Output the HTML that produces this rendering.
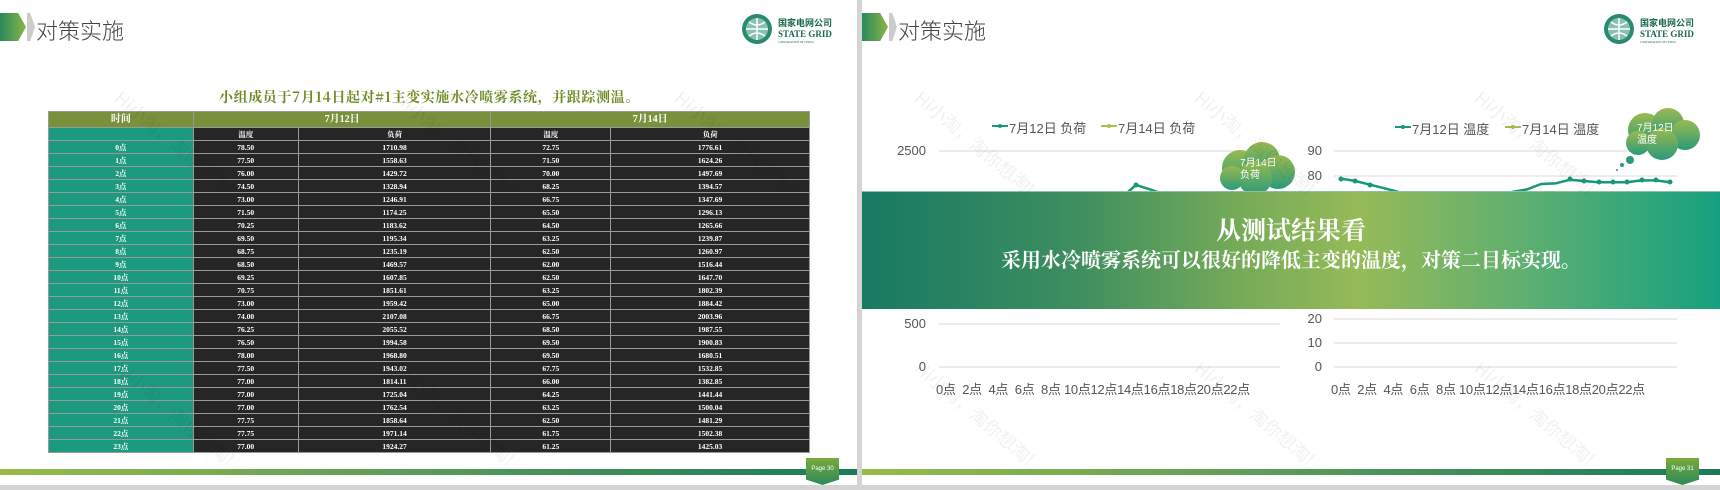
<!DOCTYPE html>
<html><head><meta charset="utf-8"><style>
*{margin:0;padding:0;box-sizing:border-box}
body{width:1720px;height:490px;background:#fff;position:relative;overflow:hidden;font-family:"Liberation Sans","Noto Sans CJK SC",sans-serif}
.abs{position:absolute}
.title{font-size:22px;color:#444;font-family:"Noto Sans CJK SC",sans-serif;font-weight:300}
.chev{width:26px;height:28px;background:linear-gradient(90deg,#2a8a5a,#8ab44a);clip-path:polygon(0 0,70% 0,100% 50%,70% 100%,0 100%)}
.chev2{width:8px;height:28px;background:#ccc;clip-path:polygon(0 0,40% 0,100% 50%,40% 100%,0 100%)}
table{border-collapse:collapse;font-family:"Liberation Serif","Noto Serif CJK SC",serif;font-weight:bold;color:#fff;font-size:7.5px;text-align:center}
td{border:1px solid #9a9a9a;height:13px;padding:0;line-height:11px;background:#262626}
td.t{background:#1c9a80}
tr.h td{background:#78913a;height:16px;font-size:10px}
.cap{font-family:"Noto Serif CJK SC","Liberation Serif",serif;color:#6e8a22;font-size:14px;font-weight:bold;letter-spacing:0.6px}
.wm{color:rgba(0,0,0,0.06);font-size:18px;transform:rotate(40deg);font-family:"Noto Sans CJK SC",sans-serif;white-space:nowrap}
.pg{width:33px;height:27px;background:linear-gradient(#7aaa3a,#2a8a5a);clip-path:polygon(0 0,100% 0,100% 80%,50% 100%,0 80%);color:#fff;font-size:6px;text-align:center;line-height:22px}
.ax{font-size:13px;color:#555;font-family:"Liberation Sans","Noto Sans CJK SC",sans-serif}
.leg{font-size:13px;color:#555;font-family:"Liberation Sans","Noto Sans CJK SC",sans-serif}
</style></head><body>

<div class="abs" style="left:857px;top:0;width:5px;height:490px;background:#d4d4d4"></div>
<div class="abs" style="left:0;top:485px;width:1720px;height:5px;background:#d4d4d4"></div>

<div class="abs chev" style="left:0;top:13px"></div>
<div class="abs chev2" style="left:27px;top:13px"></div>
<div class="abs title" style="left:36px;top:14px">对策实施</div>

<svg class="abs" style="left:740px;top:12px" width="100" height="36">
<circle cx="17" cy="17" r="15" fill="#2a8a70"/><circle cx="17" cy="17" r="11" fill="#8ac0b0"/><path d="M6 17 H28 M17 6 V28 M9 10 Q17 16 25 10 M9 24 Q17 18 25 24" stroke="#fff" stroke-width="1.5" fill="none"/>
<text x="38" y="14" font-size="9" fill="#1a6a4a" font-weight="bold" font-family="Noto Sans CJK SC,sans-serif">国家电网公司</text>
<text x="38" y="25" font-size="9" fill="#1a6a4a" font-weight="bold" font-family="Liberation Serif,serif">STATE GRID</text>
<text x="38" y="31" font-size="3" fill="#1a6a4a" font-family="Liberation Serif,serif">CORPORATION OF CHINA</text>
</svg>

<div class="abs cap" style="left:219px;top:87px">小组成员于7月14日起对#1主变实施水冷喷雾系统，并跟踪测温。</div>

<table class="abs" style="left:48px;top:111px;width:762px">
<colgroup><col style="width:145px"><col style="width:105px"><col style="width:193px"><col style="width:120px"><col style="width:199px"></colgroup>
<tr class="h"><td>时间</td><td colspan="2">7月12日</td><td colspan="2">7月14日</td></tr>
<tr><td class="t"></td><td>温度</td><td>负荷</td><td>温度</td><td>负荷</td></tr>
<tr><td class="t">0点</td><td>78.50</td><td>1710.98</td><td>72.75</td><td>1776.61</td></tr>
<tr><td class="t">1点</td><td>77.50</td><td>1558.63</td><td>71.50</td><td>1624.26</td></tr>
<tr><td class="t">2点</td><td>76.00</td><td>1429.72</td><td>70.00</td><td>1497.69</td></tr>
<tr><td class="t">3点</td><td>74.50</td><td>1328.94</td><td>68.25</td><td>1394.57</td></tr>
<tr><td class="t">4点</td><td>73.00</td><td>1246.91</td><td>66.75</td><td>1347.69</td></tr>
<tr><td class="t">5点</td><td>71.50</td><td>1174.25</td><td>65.50</td><td>1296.13</td></tr>
<tr><td class="t">6点</td><td>70.25</td><td>1183.62</td><td>64.50</td><td>1265.66</td></tr>
<tr><td class="t">7点</td><td>69.50</td><td>1195.34</td><td>63.25</td><td>1239.87</td></tr>
<tr><td class="t">8点</td><td>68.75</td><td>1235.19</td><td>62.50</td><td>1260.97</td></tr>
<tr><td class="t">9点</td><td>68.50</td><td>1469.57</td><td>62.00</td><td>1516.44</td></tr>
<tr><td class="t">10点</td><td>69.25</td><td>1607.85</td><td>62.50</td><td>1647.70</td></tr>
<tr><td class="t">11点</td><td>70.75</td><td>1851.61</td><td>63.25</td><td>1802.39</td></tr>
<tr><td class="t">12点</td><td>73.00</td><td>1959.42</td><td>65.00</td><td>1884.42</td></tr>
<tr><td class="t">13点</td><td>74.00</td><td>2107.08</td><td>66.75</td><td>2003.96</td></tr>
<tr><td class="t">14点</td><td>76.25</td><td>2055.52</td><td>68.50</td><td>1987.55</td></tr>
<tr><td class="t">15点</td><td>76.50</td><td>1994.58</td><td>69.50</td><td>1900.83</td></tr>
<tr><td class="t">16点</td><td>78.00</td><td>1968.80</td><td>69.50</td><td>1680.51</td></tr>
<tr><td class="t">17点</td><td>77.50</td><td>1943.02</td><td>67.75</td><td>1532.85</td></tr>
<tr><td class="t">18点</td><td>77.00</td><td>1814.11</td><td>66.00</td><td>1382.85</td></tr>
<tr><td class="t">19点</td><td>77.00</td><td>1725.04</td><td>64.25</td><td>1441.44</td></tr>
<tr><td class="t">20点</td><td>77.00</td><td>1762.54</td><td>63.25</td><td>1500.04</td></tr>
<tr><td class="t">21点</td><td>77.75</td><td>1858.64</td><td>62.50</td><td>1481.29</td></tr>
<tr><td class="t">22点</td><td>77.75</td><td>1971.14</td><td>61.75</td><td>1502.38</td></tr>
<tr><td class="t">23点</td><td>77.00</td><td>1924.27</td><td>61.25</td><td>1425.03</td></tr>
</table>

<div class="abs" style="left:0;top:469px;width:857px;height:6px;background:linear-gradient(90deg,#9aba4a,#5a9a5a 50%,#1a7a5a)"></div>
<div class="abs pg" style="left:806px;top:458px">Page 30</div>

<div class="abs chev" style="left:862px;top:13px"></div>
<div class="abs chev2" style="left:889px;top:13px"></div>
<div class="abs title" style="left:898px;top:14px">对策实施</div>
<svg class="abs" style="left:1602px;top:12px" width="100" height="36">
<circle cx="17" cy="17" r="15" fill="#2a8a70"/><circle cx="17" cy="17" r="11" fill="#8ac0b0"/><path d="M6 17 H28 M17 6 V28 M9 10 Q17 16 25 10 M9 24 Q17 18 25 24" stroke="#fff" stroke-width="1.5" fill="none"/>
<text x="38" y="14" font-size="9" fill="#1a6a4a" font-weight="bold" font-family="Noto Sans CJK SC,sans-serif">国家电网公司</text>
<text x="38" y="25" font-size="9" fill="#1a6a4a" font-weight="bold" font-family="Liberation Serif,serif">STATE GRID</text>
<text x="38" y="31" font-size="3" fill="#1a6a4a" font-family="Liberation Serif,serif">CORPORATION OF CHINA</text>
</svg>

<svg class="abs" style="left:0;top:0" width="1720" height="490">
<defs><linearGradient id="cg" x1="0" y1="0" x2="0" y2="1"><stop offset="0" stop-color="#9aba50"/><stop offset="1" stop-color="#2a9a7a"/></linearGradient></defs>
<g stroke="#e6e6e6" stroke-width="1.5">
<line x1="939" y1="151" x2="1280" y2="151"/><line x1="939" y1="194" x2="1280" y2="194"/><line x1="939" y1="324" x2="1280" y2="324"/><line x1="939" y1="367" x2="1280" y2="367"/>
<line x1="1334" y1="151" x2="1677" y2="151"/><line x1="1334" y1="176" x2="1677" y2="176"/><line x1="1334" y1="319" x2="1677" y2="319"/><line x1="1334" y1="343" x2="1677" y2="343"/><line x1="1334" y1="367" x2="1677" y2="367"/>
</g>
<g transform="translate(950,367) scale(14.3,-0.0864)" fill="none" stroke-width="2.5">
<polyline vector-effect="non-scaling-stroke" stroke="#a8c050" points="0,1776 1,1624 2,1497 3,1394 4,1347 5,1296 6,1265 7,1239 8,1260 9,1516 10,1647 11,1802 12,1884 13,2004 14,1987 15,1900 16,1680 17,1532 18,1382 19,1441 20,1500 21,1481 22,1502 23,1425"/>
<polyline vector-effect="non-scaling-stroke" stroke="#16987a" points="0,1711 1,1558 2,1430 3,1329 4,1247 5,1174 6,1184 7,1195 8,1235 9,1470 10,1608 11,1852 12,1959 13,2107 14,2055 15,1995 16,1969 17,1943 18,1814 19,1725 20,1762 21,1859 22,1971 23,1924"/>
</g>
<g transform="translate(1341,367) scale(14.3,-2.4)" fill="none" stroke-width="2.5">
<polyline vector-effect="non-scaling-stroke" stroke="#a8c050" points="0,72.75 1,71.5 2,70 3,68.25 4,66.75 5,65.5 6,64.5 7,63.25 8,62.5 9,62 10,62.5 11,63.25 12,65 13,66.75 14,68.5 15,69.5 16,69.5 17,67.75 18,66 19,64.25 20,63.25 21,62.5 22,61.75 23,61.25"/>
<polyline vector-effect="non-scaling-stroke" stroke="#16987a" points="0,78.5 1,77.5 2,76 3,74.5 4,73 5,71.5 6,70.25 7,69.5 8,68.75 9,68.5 10,69.25 11,70.75 12,73 13,74 14,76.25 15,76.5 16,78 17,77.5 18,77 19,77 20,77 21,77.75 22,77.75 23,77"/>
</g>
<g fill="#16987a"><circle cx="1341" cy="179" r="2.5"/><circle cx="1355" cy="181" r="2.5"/><circle cx="1370" cy="185" r="2.5"/><circle cx="1570" cy="179" r="2.5"/><circle cx="1584" cy="181" r="2.5"/><circle cx="1599" cy="182" r="2.5"/><circle cx="1613" cy="182" r="2.5"/><circle cx="1627" cy="182" r="2.5"/><circle cx="1642" cy="180" r="2.5"/><circle cx="1656" cy="180" r="2.5"/><circle cx="1670" cy="182" r="2.5"/><circle cx="1136" cy="185" r="2.5"/></g>
<g fill="url(#cg)"><circle cx="1240" cy="168" r="18"/><circle cx="1262" cy="160" r="18"/><circle cx="1278" cy="172" r="17"/><circle cx="1255" cy="178" r="17"/><circle cx="1232" cy="178" r="12"/></g>
<g fill="url(#cg)"><circle cx="1645" cy="130" r="17"/><circle cx="1668" cy="124" r="16"/><circle cx="1685" cy="135" r="15"/><circle cx="1662" cy="144" r="16"/><circle cx="1638" cy="143" r="12"/></g>
<circle cx="1630" cy="160" r="4" fill="#2a9a7a"/><circle cx="1622" cy="165" r="2" fill="#2a9a7a"/><circle cx="1617" cy="170" r="1" fill="#2a9a7a"/>
<text x="1240" y="166" font-size="10" fill="#fff" font-family="Liberation Sans,Noto Sans CJK SC,sans-serif">7月14日</text>
<text x="1240" y="178" font-size="10" fill="#fff" font-family="Noto Sans CJK SC,sans-serif">负荷</text>
<text x="1637" y="131" font-size="10" fill="#fff" font-family="Liberation Sans,Noto Sans CJK SC,sans-serif">7月12日</text>
<text x="1637" y="143" font-size="10" fill="#fff" font-family="Noto Sans CJK SC,sans-serif">温度</text>
<line x1="992" y1="126" x2="1008" y2="126" stroke="#16987a" stroke-width="2"/><circle cx="1000" cy="126" r="2" fill="#16987a"/>
<line x1="1101" y1="126" x2="1117" y2="126" stroke="#a8c050" stroke-width="2"/><circle cx="1109" cy="126" r="2" fill="#a8c050"/>
<line x1="1395" y1="127" x2="1411" y2="127" stroke="#16987a" stroke-width="2"/><circle cx="1403" cy="127" r="2" fill="#16987a"/>
<line x1="1505" y1="127" x2="1521" y2="127" stroke="#a8c050" stroke-width="2"/><circle cx="1513" cy="127" r="2" fill="#a8c050"/>
</svg>
<div class="abs leg" style="left:1009px;top:118px">7月12日 负荷</div>
<div class="abs leg" style="left:1118px;top:118px">7月14日 负荷</div>
<div class="abs leg" style="left:1412px;top:119px">7月12日 温度</div>
<div class="abs leg" style="left:1522px;top:119px">7月14日 温度</div>

<div class="abs ax" style="left:893px;top:143px;width:33px;text-align:right">2500</div>
<div class="abs ax" style="left:893px;top:316px;width:33px;text-align:right">500</div>
<div class="abs ax" style="left:893px;top:359px;width:33px;text-align:right">0</div>
<div class="abs ax" style="left:1300px;top:143px;width:22px;text-align:right">90</div>
<div class="abs ax" style="left:1300px;top:168px;width:22px;text-align:right">80</div>
<div class="abs ax" style="left:1300px;top:311px;width:22px;text-align:right">20</div>
<div class="abs ax" style="left:1300px;top:335px;width:22px;text-align:right">10</div>
<div class="abs ax" style="left:1300px;top:359px;width:22px;text-align:right">0</div>
<div class="abs ax" style="left:936px;top:379px;letter-spacing:-0.3px;white-space:nowrap">0点&nbsp; 2点&nbsp; 4点&nbsp; 6点&nbsp; 8点 10点12点14点16点18点20点22点</div>
<div class="abs ax" style="left:1331px;top:379px;letter-spacing:-0.3px;white-space:nowrap">0点&nbsp; 2点&nbsp; 4点&nbsp; 6点&nbsp; 8点 10点12点14点16点18点20点22点</div>

<div class="abs" style="left:862px;top:191px;width:858px;height:118px;background:linear-gradient(90deg,#177a62 0%,#3e8e60 25%,#78ac58 45%,#96ba58 58%,#5caf72 78%,#16a080 100%);border-top:1px solid #8fc0a0"></div>
<div class="abs" style="left:862px;top:214px;width:858px;text-align:center;color:#fff;font-family:'Noto Serif CJK SC',serif;font-size:25px;font-weight:bold;line-height:30px">从测试结果看</div>
<div class="abs" style="left:862px;top:246px;width:858px;text-align:center;color:#fff;font-family:'Noto Serif CJK SC',serif;font-size:20px;font-weight:bold;line-height:26px">采用水冷喷雾系统可以很好的降低主变的温度，对策二目标实现。</div>

<div class="abs" style="left:862px;top:469px;width:858px;height:6px;background:linear-gradient(90deg,#9aba4a,#5a9a5a 50%,#1a7a5a)"></div>
<div class="abs pg" style="left:1666px;top:458px">Page 31</div>

<div class="abs wm" style="left:100px;top:130px">Hi小淘，淘你想淘!</div>
<div class="abs wm" style="left:380px;top:130px">Hi小淘，淘你想淘!</div>
<div class="abs wm" style="left:660px;top:130px">Hi小淘，淘你想淘!</div>
<div class="abs wm" style="left:100px;top:400px">Hi小淘，淘你想淘!</div>
<div class="abs wm" style="left:380px;top:400px">Hi小淘，淘你想淘!</div>
<div class="abs wm" style="left:900px;top:130px">Hi小淘，淘你想淘!</div>
<div class="abs wm" style="left:1180px;top:130px">Hi小淘，淘你想淘!</div>
<div class="abs wm" style="left:1460px;top:130px">Hi小淘，淘你想淘!</div>
<div class="abs wm" style="left:900px;top:400px">Hi小淘，淘你想淘!</div>
<div class="abs wm" style="left:1180px;top:400px">Hi小淘，淘你想淘!</div>
<div class="abs wm" style="left:1460px;top:400px">Hi小淘，淘你想淘!</div>
</body></html>
